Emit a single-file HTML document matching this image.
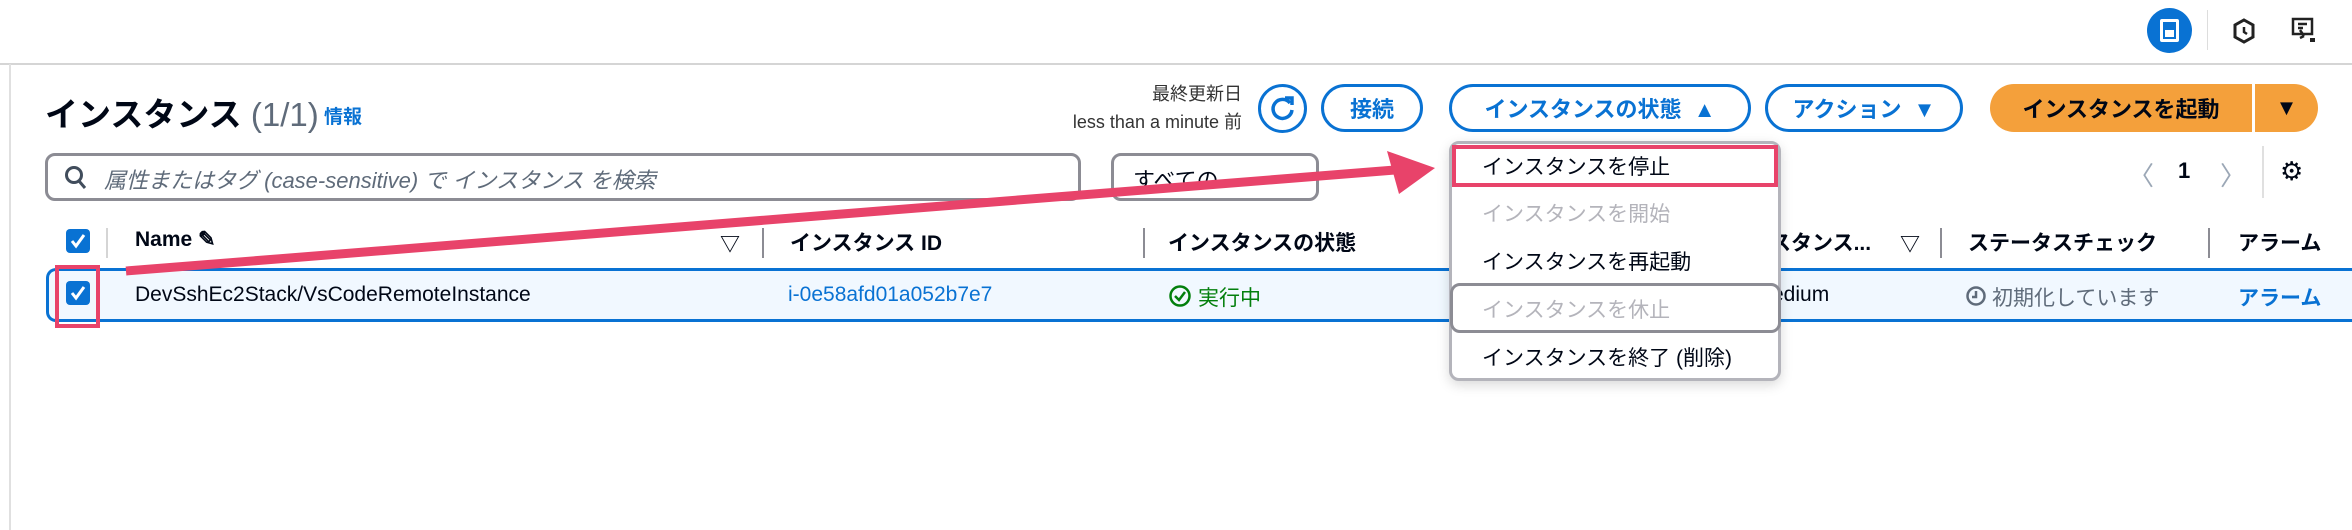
<!DOCTYPE html>
<html><head><meta charset="utf-8"><style>
*{margin:0;padding:0;box-sizing:border-box}
body{width:2352px;height:530px;background:#fff;font-family:"Liberation Sans","Noto Sans CJK JP",sans-serif;color:#000716;position:relative;overflow:hidden}
.a{position:absolute;white-space:nowrap}
.btn{position:absolute;border:3px solid #0972d3;border-radius:24px;color:#0972d3;font-weight:bold;font-size:22px;display:flex;align-items:center;justify-content:center;height:48px;top:84px}
.hd{font-weight:bold;font-size:21px;color:#000716;top:227px}
.dv{position:absolute;width:2px;height:30px;background:#8c8c94;top:228px}
.mi{position:absolute;left:1482px;font-size:21px}
.cb{position:absolute;width:24px;height:24px;background:#0972d3;border-radius:4px}
</style></head><body>
<div class="a" style="left:0;top:63px;width:2352px;height:2px;background:#d5d5d5"></div>
<div class="a" style="left:9px;top:64px;width:2px;height:466px;background:#e0e0e0"></div>
<!-- top icons -->
<div class="a" style="left:2147px;top:8px;width:45px;height:45px;border-radius:50%;background:#0972d3"></div>
<div class="a" style="left:2160px;top:19px;width:19px;height:23px;border:3px solid #fff;border-radius:2px"></div>
<div class="a" style="left:2165px;top:30px;width:9px;height:7px;background:#fff"></div>
<div class="a" style="left:2207px;top:10px;width:1px;height:40px;background:#ddd"></div>
<svg class="a" style="left:2232px;top:18px" width="24" height="26" viewBox="0 0 24 26"><path d="M12 2 L21 7 V19 L12 24 L3 19 V7 Z" fill="none" stroke="#222" stroke-width="3"/><path d="M12 9 V14 L15 16" stroke="#222" stroke-width="2.5" fill="none"/></svg>
<svg class="a" style="left:2290px;top:16px" width="28" height="28" viewBox="0 0 28 28"><rect x="3" y="3" width="19" height="15" fill="none" stroke="#222" stroke-width="2.5"/><path d="M8 8h9M8 12h5M10 14 L14 20 M14 20 L10 22" stroke="#222" stroke-width="2.5" fill="none"/><rect x="20" y="22" width="5" height="4" fill="#222"/></svg>
<!-- title -->
<div class="a" style="left:45px;top:88px;font-size:33px;font-weight:bold">インスタンス <span style="font-weight:normal;color:#5f6b7a">(1/1)</span></div>
<div class="a" style="left:324px;top:102px;font-size:19px;font-weight:bold;color:#0972d3">情報</div>
<div class="a" style="left:1142px;top:80px;width:100px;text-align:right;font-size:18px;color:#333">最終更新日</div>
<div class="a" style="left:1042px;top:108px;width:200px;text-align:right;font-size:18px;color:#333">less than a minute 前</div>
<div class="a" style="left:1258px;top:84px;width:49px;height:49px;border:3px solid #0972d3;border-radius:50%"></div>
<svg class="a" style="left:1268px;top:94px" width="29" height="29" viewBox="0 0 29 29"><path d="M22 9 A9.5 9.5 0 1 0 24 16" fill="none" stroke="#0972d3" stroke-width="3.5"/><path d="M17 4 L24 4 L24 11" fill="none" stroke="#0972d3" stroke-width="3.5"/></svg>
<div class="btn" style="left:1321px;width:102px">接続</div>
<div class="btn" style="left:1449px;width:302px">インスタンスの状態&nbsp;&nbsp;▲</div>
<div class="btn" style="left:1765px;width:198px">アクション&nbsp;&nbsp;▼</div>
<div class="a" style="left:1990px;top:84px;width:262px;height:48px;background:#f4a03b;border-radius:24px 0 0 24px;font-weight:bold;font-size:22px;display:flex;align-items:center;justify-content:center">インスタンスを起動</div>
<div class="a" style="left:2255px;top:84px;width:63px;height:48px;background:#f4a03b;border-radius:0 24px 24px 0;font-size:22px;display:flex;align-items:center;justify-content:center">▼</div>
<!-- search -->
<div class="a" style="left:45px;top:153px;width:1036px;height:48px;border:3px solid #8c8c94;border-radius:10px"></div>
<svg class="a" style="left:64px;top:165px" width="24" height="26" viewBox="0 0 24 26"><circle cx="10" cy="10" r="7.5" fill="none" stroke="#414d5c" stroke-width="3"/><path d="M15 16 L21 23" stroke="#414d5c" stroke-width="3"/></svg>
<div class="a" style="left:104px;top:163px;font-size:22px;font-style:italic;color:#5f6b7a">属性またはタグ (case-sensitive) で インスタンス を検索</div>
<div class="a" style="left:1111px;top:153px;width:208px;height:48px;border:3px solid #8c8c94;border-radius:10px"></div>
<div class="a" style="left:1133px;top:163px;font-size:22px">すべての</div>
<!-- pagination -->
<div class="a" style="left:2128px;top:156px;font-size:26px;color:#9ba7b6">〈</div>
<div class="a" style="left:2178px;top:158px;font-size:22px;font-weight:bold">1</div>
<div class="a" style="left:2220px;top:156px;font-size:26px;color:#9ba7b6">〉</div>
<div class="a" style="left:2262px;top:146px;width:2px;height:52px;background:#e0e0e0"></div>
<div class="a" style="left:2280px;top:156px;font-size:26px">⚙</div>
<!-- header -->
<div class="cb" style="left:66px;top:229px"></div>
<svg class="a" style="left:66px;top:229px" width="24" height="24"><path d="M6 12 L10 17 L18 6" stroke="#fff" stroke-width="3" fill="none"/></svg>
<div class="a" style="left:106px;top:228px;width:2px;height:30px;background:#d5d5d5"></div>
<div class="a hd" style="left:135px">Name ✎</div>
<div class="a" style="left:720px;top:228px;font-size:20px;font-weight:bold">▽</div>
<div class="dv" style="left:762px"></div>
<div class="a hd" style="left:790px">インスタンス ID</div>
<div class="dv" style="left:1143px"></div>
<div class="a hd" style="left:1168px">インスタンスの状態</div>
<div class="a hd" style="left:1770px">スタンス...</div>
<div class="a" style="left:1900px;top:228px;font-size:20px;font-weight:bold">▽</div>
<div class="dv" style="left:1940px"></div>
<div class="a hd" style="left:1968px">ステータスチェック</div>
<div class="dv" style="left:2208px"></div>
<div class="a hd" style="left:2238px">アラーム</div>
<!-- row -->
<div class="a" style="left:46px;top:268px;width:2306px;height:54px;background:#f1f8ff;border:3px solid #0972d3;border-right:none;border-radius:10px 0 0 10px"></div>
<div class="cb" style="left:66px;top:281px"></div>
<svg class="a" style="left:66px;top:281px" width="24" height="24"><path d="M6 12 L10 17 L18 6" stroke="#fff" stroke-width="3" fill="none"/></svg>
<div class="a" style="left:55px;top:265px;width:45px;height:63px;border:4px solid #e8436a"></div>
<div class="a" style="left:135px;top:283px;font-size:21px">DevSshEc2Stack/VsCodeRemoteInstance</div>
<div class="a" style="left:788px;top:283px;font-size:21px;color:#0972d3">i-0e58afd01a052b7e7</div>
<svg class="a" style="left:1168px;top:284px" width="24" height="24"><circle cx="12" cy="12" r="9.5" fill="none" stroke="#037f0c" stroke-width="2.5"/><path d="M7 12 L11 16 L17 8" stroke="#037f0c" stroke-width="2.5" fill="none"/></svg>
<div class="a" style="left:1198px;top:282px;font-size:21px;color:#037f0c">実行中</div>
<div class="a" style="left:1772px;top:283px;font-size:21px">edium</div>
<svg class="a" style="left:1965px;top:285px" width="22" height="22"><circle cx="11" cy="11" r="8.5" fill="none" stroke="#5f6b7a" stroke-width="2.5"/><path d="M11 6 V12 H7" stroke="#5f6b7a" stroke-width="2.5" fill="none"/></svg>
<div class="a" style="left:1992px;top:282px;font-size:21px;color:#5f6b7a">初期化しています</div>
<div class="a" style="left:2238px;top:282px;font-size:21px;font-weight:bold;color:#0972d3">アラーム</div>
<!-- arrow -->
<svg class="a" style="left:0;top:0" width="2352" height="530"><line x1="126" y1="271" x2="1395" y2="170" stroke="#e8436a" stroke-width="9"/><polygon points="1387,151 1399,194 1435,168" fill="#e8436a"/></svg>
<!-- menu -->
<div class="a" style="left:1449px;top:141px;width:332px;height:240px;background:#fff;border:3px solid #b4b4bb;border-radius:10px;box-shadow:0 4px 12px rgba(0,0,0,.15)"></div>
<div class="a" style="left:1452px;top:145px;width:326px;height:42px;border:4px solid #e8436a"></div>
<div class="mi" style="top:151px">インスタンスを停止</div>
<div class="mi" style="top:198px;color:#b4b4bb">インスタンスを開始</div>
<div class="mi" style="top:246px">インスタンスを再起動</div>
<div class="a" style="left:1450px;top:283px;width:331px;height:50px;border:3px solid #8c8c94;border-radius:10px"></div>
<div class="mi" style="top:294px;color:#b4b4bb">インスタンスを休止</div>
<div class="mi" style="top:342px">インスタンスを終了 (削除)</div>
</body></html>
